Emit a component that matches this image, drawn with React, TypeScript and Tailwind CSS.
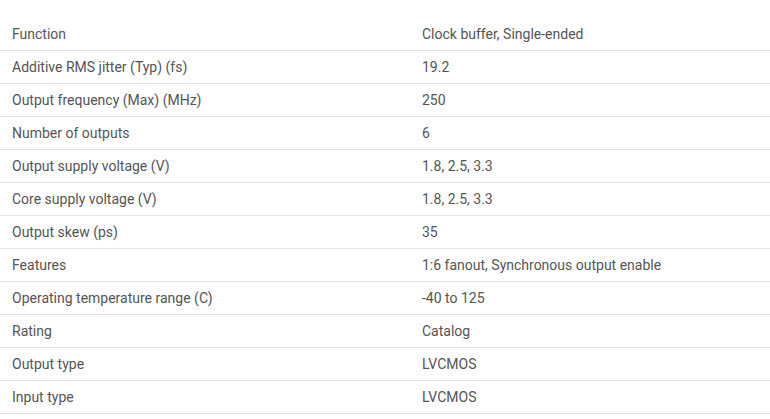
const rows: [string, string][] = [
  ["Function", "Clock buffer, Single-ended"],
  ["Additive RMS jitter (Typ) (fs)", "19.2"],
  ["Output frequency (Max) (MHz)", "250"],
  ["Number of outputs", "6"],
  ["Output supply voltage (V)", "1.8, 2.5, 3.3"],
  ["Core supply voltage (V)", "1.8, 2.5, 3.3"],
  ["Output skew (ps)", "35"],
  ["Features", "1:6 fanout, Synchronous output enable"],
  ["Operating temperature range (C)", "-40 to 125"],
  ["Rating", "Catalog"],
  ["Output type", "LVCMOS"],
  ["Input type", "LVCMOS"],
]

export default function App() {
  return (
    <div className="bg-white pt-[18px] font-['Roboto',sans-serif] text-[14px] text-[#555]">
      {rows.map(([label, value]) => (
        <div key={label} className="flex h-[33px] items-center border-b border-[#e4e4e4]">
          <div className="w-[410px] px-3">{label}</div>
          <div className="px-3">{value}</div>
        </div>
      ))}
    </div>
  )
}
